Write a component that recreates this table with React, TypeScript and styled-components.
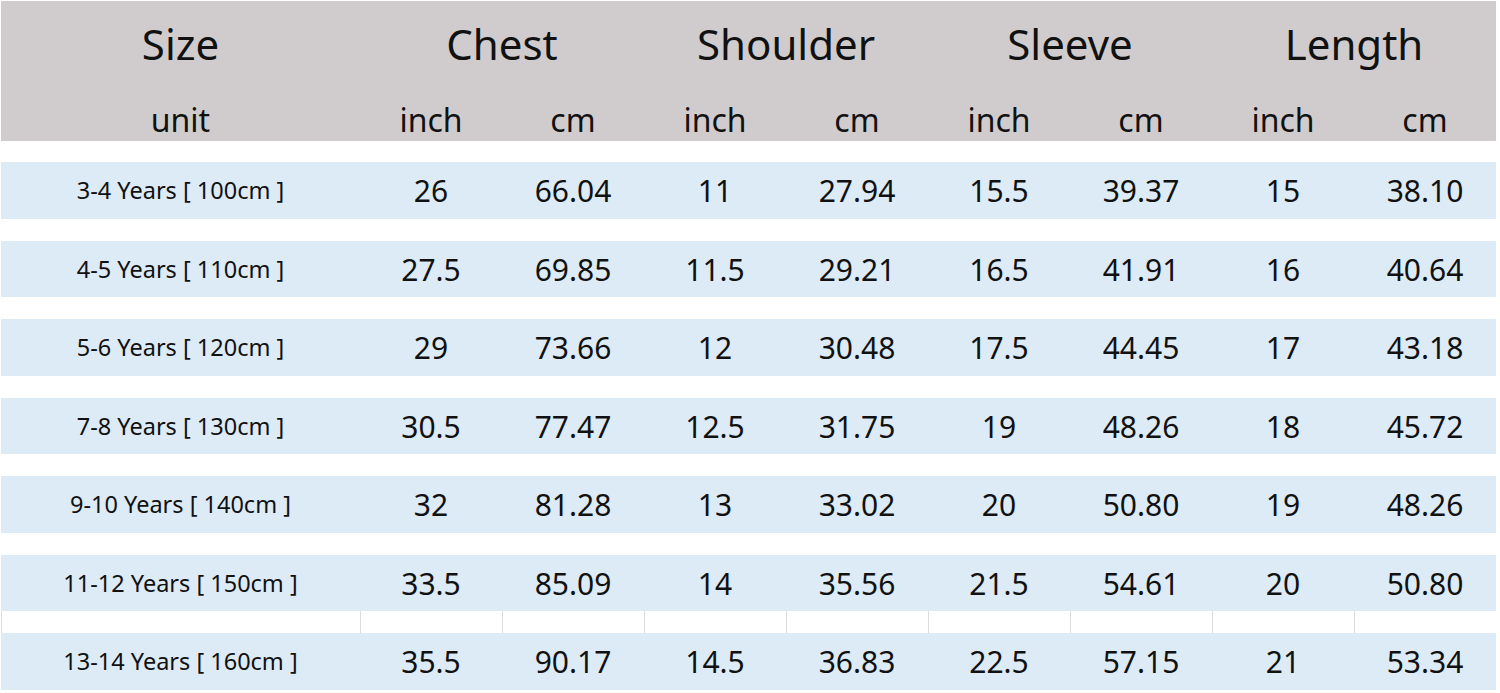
import React from 'react';
import styled, { createGlobalStyle } from 'styled-components';

const GlobalStyle = createGlobalStyle`
  html, body {
    margin: 0;
    padding: 0;
    background: #ffffff;
  }
  body {
    font-family: "Noto Sans", "Open Sans", sans-serif;
    color: #111111;
  }
`;

const Page = styled.div`
  width: 1500px;
  height: 693px;
  padding: 1px 0 0 1px;
  box-sizing: border-box;
  overflow: hidden;
`;

const Grid = styled.div`
  display: grid;
  grid-template-columns: 359px repeat(8, 142px);
  width: 1495px;
`;

const HeadCell = styled.div<{ $span?: number; $height: number; $size: number; $shift?: number }>`
  grid-column: span ${(p) => p.$span || 1};
  height: ${(p) => p.$height}px;
  box-sizing: border-box;
  padding-top: ${(p) => p.$shift || 0}px;
  background: #d0cccd;
  display: flex;
  align-items: center;
  justify-content: center;
  font-size: ${(p) => p.$size}px;
  line-height: 1;
`;

const Gap = styled.div<{ $height: number; $lines?: boolean }>`
  grid-column: 1 / -1;
  height: ${(p) => p.$height}px;
  background: #ffffff;
  display: grid;
  grid-template-columns: 359px repeat(8, 142px);
  & > div {
    border-left: ${(p) => (p.$lines ? '1px solid #dcdcdc' : 'none')};
  }
`;

const Cell = styled.div<{ $label?: boolean }>`
  height: 56.5px;
  background: #ddebf7;
  display: flex;
  align-items: center;
  justify-content: center;
  font-size: ${(p) => (p.$label ? '23.5px' : '30px')};
  line-height: 1;
  padding-top: ${(p) => (p.$label ? '1px' : '2px')};
  box-sizing: border-box;
`;

const rows: string[][] = [
  ['3-4 Years [ 100cm ]', '26', '66.04', '11', '27.94', '15.5', '39.37', '15', '38.10'],
  ['4-5 Years [ 110cm ]', '27.5', '69.85', '11.5', '29.21', '16.5', '41.91', '16', '40.64'],
  ['5-6 Years [ 120cm ]', '29', '73.66', '12', '30.48', '17.5', '44.45', '17', '43.18'],
  ['7-8 Years [ 130cm ]', '30.5', '77.47', '12.5', '31.75', '19', '48.26', '18', '45.72'],
  ['9-10 Years [ 140cm ]', '32', '81.28', '13', '33.02', '20', '50.80', '19', '48.26'],
  ['11-12 Years [ 150cm ]', '33.5', '85.09', '14', '35.56', '21.5', '54.61', '20', '50.80'],
  ['13-14 Years [ 160cm ]', '35.5', '90.17', '14.5', '36.83', '22.5', '57.15', '21', '53.34'],
];

const groups = ['Chest', 'Shoulder', 'Sleeve', 'Length'];

const App = () => {
  return (
    <>
      <GlobalStyle />
      <Page>
        <Grid>
          <HeadCell $height={82} $size={42} $shift={4}>Size</HeadCell>
          {groups.map((g) => (
            <HeadCell key={g} $span={2} $height={82} $size={42} $shift={4}>
              {g}
            </HeadCell>
          ))}
          <HeadCell $height={58} $size={32} $shift={16}>unit</HeadCell>
          {groups.map((g) => (
            <React.Fragment key={g}>
              <HeadCell $height={58} $size={32} $shift={16}>inch</HeadCell>
              <HeadCell $height={58} $size={32} $shift={16}>cm</HeadCell>
            </React.Fragment>
          ))}
          <Gap $height={21} />
          {rows.map((r, i) => (
            <React.Fragment key={r[0]}>
              {i > 0 && (
                <Gap $height={22} $lines={i === rows.length - 1}>
                  {r.map((_, j) => (
                    <div key={j} />
                  ))}
                </Gap>
              )}
              {r.map((v, j) => (
                <Cell key={j} $label={j === 0}>
                  {v}
                </Cell>
              ))}
            </React.Fragment>
          ))}
        </Grid>
      </Page>
    </>
  );
};

export default App;
